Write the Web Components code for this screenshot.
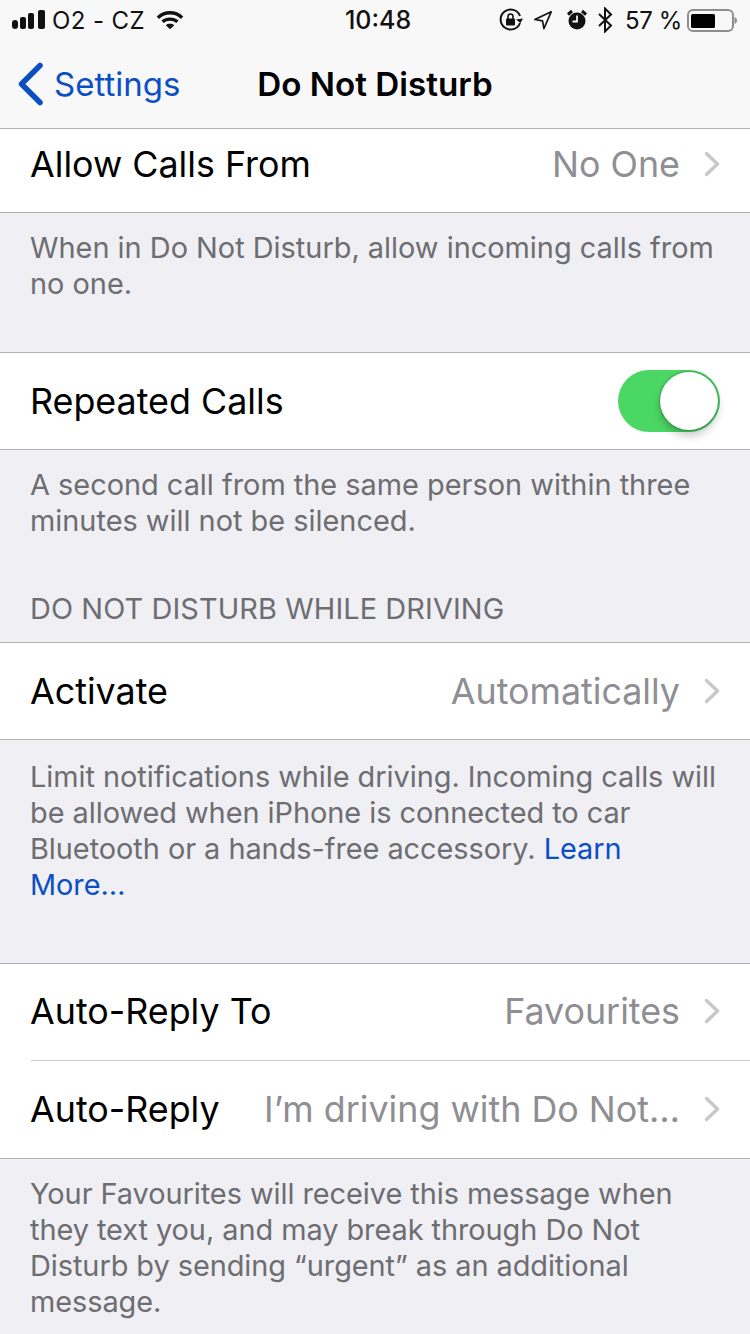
<!DOCTYPE html>
<html>
<head>
<meta charset="utf-8">
<title>Do Not Disturb</title>
<style>
  html, body { margin: 0; padding: 0; background: #efeff4; }
  body { width: 750px; height: 1334px; overflow: hidden; font-family: Inter, "Liberation Sans", sans-serif; }
  a { color: #0b4fc4; text-decoration: none; }
</style>
</head>
<body>
<status-bar></status-bar>
<nav-bar back="Settings" title="Do Not Disturb"></nav-bar>

<cell-group>
  <table-cell class="scrolled" label="Allow Calls From" value="No One" height="83"></table-cell>
</cell-group>
<group-note height="139">When in Do Not Disturb, allow incoming calls from no one.</group-note>

<cell-group>
  <table-cell label="Repeated Calls" height="96"><toggle-switch slot="accessory"></toggle-switch></table-cell>
</cell-group>
<group-note height="192" heading="DO NOT DISTURB WHILE DRIVING">A second call from the same person within three minutes will not be silenced.</group-note>

<cell-group>
  <table-cell label="Activate" value="Automatically" height="96"></table-cell>
</cell-group>
<group-note height="223" style="padding-top:19px;letter-spacing:-0.04px">Limit notifications while driving. Incoming calls will be allowed when iPhone is connected to car<br>Bluetooth or a hands-free accessory. <a>Learn</a><br><a>More…</a></group-note>

<cell-group>
  <table-cell label="Auto-Reply To" value="Favourites" height="97" divider></table-cell>
  <table-cell class="last" label="Auto-Reply" value="I’m driving with Do Not…" height="97"></table-cell>
</cell-group>
<group-note height="175" style="letter-spacing:-0.05px">Your Favourites will receive this message when they text you, and may break through Do Not Disturb by sending “urgent” as an additional message.</group-note>

<script>
const statusTemplate = document.createElement('template');
statusTemplate.innerHTML = `
  <style>
    :host {
      display: flex;
      align-items: center;
      justify-content: space-between;
      height: 40px;
      background: #f8f8f8;
      color: #111;
      font-size: 24px;
      position: relative;
    }
    .left, .right { display: flex; align-items: center; }
    .left { padding-left: 12px; }
    .right { padding-right: 13px; }
    .carrier { margin-left: 5px; letter-spacing: 0.4px; }
    .wifi { margin-left: 11px; }
    .time {
      position: absolute;
      left: 6px;
      right: 0;
      text-align: center;
      font-weight: 500;
      font-size: 25px;
    }
    .pct { margin-left: 12px; font-size: 24px; letter-spacing: -0.4px; }
    svg { display: block; }
  </style>
  <div class="left">
    <svg width="35" height="22" viewBox="0 0 35 22" fill="#111">
      <rect x="0" y="11" width="6" height="9" rx="3"/>
      <rect x="8" y="8" width="6" height="12" rx="2"/>
      <rect x="16" y="4" width="6" height="16" rx="2"/>
      <rect x="26" y="1" width="7" height="19" rx="2"/>
    </svg>
    <span class="carrier">O2 - CZ</span>
    <svg class="wifi" width="28" height="22" viewBox="0 0 30 22" fill="none" stroke="#111" stroke-width="3.6">
      <path d="M2 8.500C9.500 1.500 20.500 1.500 28 8.500"/>
      <path d="M7 13C11.500 9 18.500 9 23 13"/>
      <path d="M15 21l-4.500-4.500c2.500-2 6.500-2 9 0z" fill="#111" stroke="none"/>
    </svg>
  </div>
  <div class="time">10:48</div>
  <div class="right">
    <svg width="24" height="24" viewBox="0 0 24 24" fill="none" stroke="#111" stroke-width="2">
      <path d="M21 15A10 10 0 1 1 21 8"/>
      <path d="M17 11.500l4.500 3.500 2.500-4.500z" fill="#111" stroke="none"/>
      <rect x="7" y="10.500" width="9" height="7" rx="1" fill="#111" stroke="none"/>
      <path d="M9 11V8.500a2.500 2.500 0 0 1 5 0V11" stroke-width="1.600"/>
    </svg>
    <svg style="margin-left:10px" width="20" height="20" viewBox="0 0 22 22" fill="none" stroke="#111" stroke-width="1.800" stroke-linejoin="round">
      <path d="M20 2L2 10.500l8.500 1.500 1.500 8.500z"/>
    </svg>
    <svg style="margin-left:13px" width="22" height="24" viewBox="0 0 22 24" fill="#111">
      <circle cx="11" cy="13" r="8.500"/>
      <path d="M2 6.500L6 3M20 6.500L16 3" stroke="#111" stroke-width="3"/>
      <path d="M11 7.500v6H6.500" stroke="#f8f8f8" stroke-width="1.800" fill="none"/>
    </svg>
    <svg style="margin-left:9px" width="16" height="26" viewBox="0 0 16 26" fill="none" stroke="#111" stroke-width="2">
      <path d="M2 7l12 11.500L8 24.500V1.500l6 6L2 19"/>
    </svg>
    <span class="pct">57 %</span>
    <svg style="margin-left:5px" width="50" height="24" viewBox="0 0 50 24">
      <rect x="1" y="2" width="45" height="21" rx="5" fill="none" stroke="#8e8e8e" stroke-width="2"/>
      <rect x="4" y="6" width="24" height="14" rx="1.500" fill="#000"/>
      <path d="M47.500 9c1.500 .5 2.500 1.500 2.500 3.500s-1 3-2.500 3.500z" fill="#8e8e8e"/>
    </svg>
  </div>
`;

class StatusBar extends HTMLElement {
    constructor() {
        super();
        this.attachShadow({ mode: 'open' });
        this.shadowRoot.appendChild(statusTemplate.content.cloneNode(true));
    }
}
customElements.define('status-bar', StatusBar);

const navTemplate = document.createElement('template');
navTemplate.innerHTML = `
  <style>
    :host {
      display: flex;
      align-items: center;
      height: 89px;
      box-sizing: border-box;
      background: #f8f8f8;
      border-bottom: 1px solid #b2b2b2;
      position: relative;
    }
    .back {
      display: flex;
      align-items: center;
      color: #0b4fc4;
      font-size: 33px;
      padding-left: 17px;
    }
    .back span { margin-left: 9px; }
    .title {
      position: absolute;
      left: 0;
      right: 0;
      text-align: center;
      font-size: 33.200px;
      font-weight: 600;
      color: #000;
    }
    svg { display: block; }
  </style>
  <div class="back">
    <svg width="28" height="44" viewBox="0 0 28 44" fill="none" stroke="#0b4fc4" stroke-width="5.500" stroke-linecap="round" stroke-linejoin="round">
      <path d="M23 3.500L4.500 22 23 40.500"/>
    </svg>
    <span id="back"></span>
  </div>
  <div class="title" id="title"></div>
`;

class NavBar extends HTMLElement {
    constructor() {
        super();
        this.attachShadow({ mode: 'open' });
        this.shadowRoot.appendChild(navTemplate.content.cloneNode(true));
    }

    connectedCallback() {
        this.shadowRoot.getElementById('back').textContent = this.getAttribute('back');
        this.shadowRoot.getElementById('title').textContent = this.getAttribute('title');
    }
}
customElements.define('nav-bar', NavBar);

const groupTemplate = document.createElement('template');
groupTemplate.innerHTML = `
  <style>
    :host {
      display: block;
      background: #fff;
      border-bottom: 1px solid #b2b2b2;
    }
    :host(.top) { border-top: 1px solid #b2b2b2; }
  </style>
  <slot></slot>
`;

class CellGroup extends HTMLElement {
    constructor() {
        super();
        this.attachShadow({ mode: 'open' });
        this.shadowRoot.appendChild(groupTemplate.content.cloneNode(true));
    }
}
customElements.define('cell-group', CellGroup);

const cellTemplate = document.createElement('template');
cellTemplate.innerHTML = `
  <style>
    :host {
      display: flex;
      align-items: center;
      box-sizing: border-box;
      padding-left: 30px;
      font-size: 35.850px;
      color: #000;
      position: relative;
    }
    :host(.scrolled) { padding-bottom: 14px; }
    :host(.last) { padding-bottom: 2px; }
    :host([divider]) { padding-bottom: 3px; }
    :host([divider])::after {
      content: '';
      position: absolute;
      left: 31px;
      right: 0;
      bottom: 0;
      height: 1px;
      background: #c8c7cc;
    }
    .label { white-space: nowrap; }
    .right {
      margin-left: auto;
      display: flex;
      align-items: center;
      padding-right: 30px;
    }
    .value { color: #8e8e93; white-space: nowrap; }
    .chev { display: block; margin-left: 24px; }
    :host(:not([value])) .value, :host(:not([value])) .chev { display: none; }
  </style>
  <span class="label" id="label"></span>
  <div class="right">
    <span class="value" id="value"></span>
    <svg class="chev" width="16" height="26" viewBox="0 0 16 26" fill="none" stroke="#c7c7cc" stroke-width="3.400" stroke-linecap="round" stroke-linejoin="round">
      <path d="M2.500 2.500L13.500 13 2.500 23.500"/>
    </svg>
    <slot name="accessory"></slot>
  </div>
`;

class TableCell extends HTMLElement {
    constructor() {
        super();
        this.attachShadow({ mode: 'open' });
        this.shadowRoot.appendChild(cellTemplate.content.cloneNode(true));
    }

    connectedCallback() {
        this.style.height = this.getAttribute('height') + 'px';
        this.shadowRoot.getElementById('label').textContent = this.getAttribute('label');
        this.shadowRoot.getElementById('value').textContent = this.getAttribute('value') || '';
    }
}
customElements.define('table-cell', TableCell);

const switchTemplate = document.createElement('template');
switchTemplate.innerHTML = `
  <style>
    :host {
      display: block;
      width: 102px;
      height: 62px;
      border-radius: 31px;
      background: #4bd763;
      position: relative;
    }
    .knob {
      position: absolute;
      right: 2px;
      top: 2px;
      width: 58px;
      height: 58px;
      border-radius: 50%;
      background: #fff;
      box-shadow: 0 6px 8px rgba(0, 0, 0, 0.2), 0 0 3px rgba(0, 0, 0, 0.4);
    }
  </style>
  <div class="knob"></div>
`;

class ToggleSwitch extends HTMLElement {
    constructor() {
        super();
        this.attachShadow({ mode: 'open' });
        this.shadowRoot.appendChild(switchTemplate.content.cloneNode(true));
    }
}
customElements.define('toggle-switch', ToggleSwitch);

const noteTemplate = document.createElement('template');
noteTemplate.innerHTML = `
  <style>
    :host {
      display: flex;
      flex-direction: column;
      box-sizing: border-box;
      padding: 17px 22px 0 30px;
      font-size: 28.900px;
      line-height: 36px;
      color: #6d6d72;
    }
    .heading {
      margin-top: auto;
      margin-bottom: 15px;
      letter-spacing: 0.1px;
    }
    .heading:empty { display: none; }
  </style>
  <div><slot></slot></div>
  <div class="heading" id="heading"></div>
`;

class GroupNote extends HTMLElement {
    constructor() {
        super();
        this.attachShadow({ mode: 'open' });
        this.shadowRoot.appendChild(noteTemplate.content.cloneNode(true));
    }

    connectedCallback() {
        this.style.height = this.getAttribute('height') + 'px';
        this.shadowRoot.getElementById('heading').textContent = this.getAttribute('heading') || '';
    }
}
customElements.define('group-note', GroupNote);

document.querySelectorAll('cell-group').forEach((g, i) => {
    if (i > 0) g.classList.add('top');
});
</script>
</body>
</html>
